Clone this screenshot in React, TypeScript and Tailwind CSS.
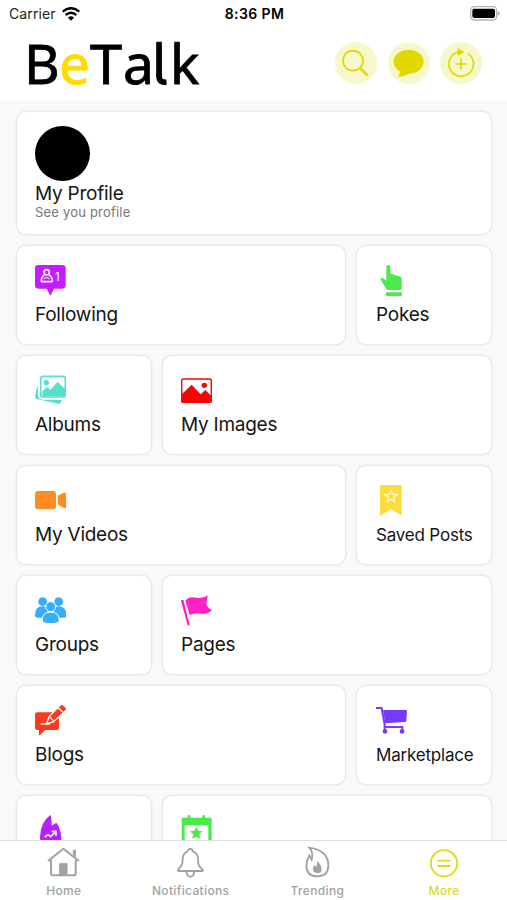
import type { ReactNode } from 'react'

function Icon({ children, className = 'size-[31px]' }: { children: ReactNode; className?: string }) {
  return (
    <svg viewBox="0 0 93 93" fill="currentColor" className={`block shrink-0 ${className}`}>
      {children}
    </svg>
  )
}

function FollowingIcon() {
  return (
    <Icon className="size-[31px] text-[#c31cff]">
      <path d="M10 0H82q10 0 10 10V61q0 10-10 10H57L46 92 35 71H10Q0 71 0 61V10Q0 0 10 0Z" />
      <g fill="none" stroke="#fff" strokeWidth="5">
        <circle cx="35" cy="22" r="8" />
        <path d="M28 30q-9 5-9 18 0 2 3 2h27q3 0 3-2 0-13-10-18" />
        <path d="M26 41q9-7 18 0" strokeWidth="3" />
      </g>
      <text x="60" y="48" fill="#fff" fontSize="34" fontFamily="Inter, sans-serif">1</text>
    </Icon>
  )
}

function PokesIcon() {
  return (
    <Icon className="size-[31px] text-[#4be94b]">
      <path d="M31 6Q31 0 37 0q6 0 6 6V27q5-2 10 3 6-2 10 3 14-1 14 8V70q0 5-5 5H36q-3 0-5-3L15 46q-3-6 3-7 4-1 7 4l6 4Z" />
      <rect x="30" y="82" width="48" height="11" rx="3" />
    </Icon>
  )
}

function AlbumsIcon() {
  return (
    <Icon className="size-[31px] text-[#52e0cf]">
      <path d="M9 31Q1 51 0 65q0 6 8 8l65 14q4 0 6-9l1-4H22Q10 73 9 61Z" />
      <rect x="17" y="4" width="74" height="62" rx="7" fill="#fff" stroke="currentColor" strokeWidth="5" />
      <circle cx="34" cy="23" r="8" />
      <path d="M22 49 36 36l10 9 22-24 22 21v22H22Z" />
    </Icon>
  )
}

function ImagesIcon() {
  return (
    <Icon className="size-[31px] text-[#f60505]">
      <rect x="2" y="12" width="89" height="70" rx="5" fill="none" stroke="currentColor" strokeWidth="4.5" />
      <circle cx="70" cy="31" r="8" />
      <path d="M3 57 32 29 59 58 73 45 91 63v19H3Z" />
    </Icon>
  )
}

function VideosIcon() {
  return (
    <Icon className="size-[31px] text-[#ff8b22]">
      <rect y="18" width="63" height="55" rx="9" />
      <path d="M68 32 86 23q7-1 7 5v37q0 6-7 4L68 58Z" />
    </Icon>
  )
}

function SavedIcon() {
  return (
    <Icon className="size-[31px] text-[#ffdc3d]">
      <path d="M12 3Q12 0 15 0H74q3 0 3 3V92L45 73 12 92Z" />
      <path d="m45 16 5 12 13 1-10 8 3 13-11-7-11 7 3-13-10-8 13-1Z" fill="none" stroke="#fff8c8" strokeWidth="4" />
    </Icon>
  )
}

function GroupsIcon() {
  return (
    <Icon className="size-[31px] text-[#36adff]">
      <circle cx="23" cy="20" r="13" />
      <circle cx="71" cy="20" r="13" />
      <path d="M0 64Q-1 34 23 34q10 0 15 8v26H8q-8-1-8-4ZM94 64Q95 34 71 34q-10 0-15 8v26h30q8-1 8-4Z" />
      <g stroke="#fff" strokeWidth="3">
        <circle cx="47" cy="35" r="15" />
        <path d="M21 78Q21 51 47 51t26 27q-5 8-26 8t-26-8Z" />
      </g>
    </Icon>
  )
}

function PagesIcon() {
  return (
    <Icon className="size-[31px] text-[#ff20ca]">
      <path d="M0 18q-1-4 4-4 4 0 5 4L26 88q0 4-4 4-2 0-3-4Z" />
      <path d="M13 17Q24 3 46 8 66 12 80 1L76 26q3 12 17 20-13 12-30 10-18-4-37 4Z" />
      <path d="m9 16 14 60" stroke="#fff" strokeWidth="2" />
    </Icon>
  )
}

function BlogsIcon() {
  return (
    <Icon className="size-[31px] text-[#fa3a1f]">
      <path d="M6 22H67q5 0 5 6V69q0 6-6 6H31L14 91q-2 1-2-2V75H6q-6 0-6-6V28q0-6 6-6Z" />
      <path d="M17 57H45" stroke="#fff" strokeWidth="4" />
      <path d="M34 57 43 34 77-1q4-3 8 1l8 7q4 5 0 9L56 50Z" stroke="#fff" strokeWidth="4" />
      <path d="m69 8 15 14M43 34l14 15" stroke="#fff" strokeWidth="4" />
    </Icon>
  )
}

function MarketIcon() {
  return (
    <Icon className="size-[31px] text-[#7839ff]">
      <path d="M21 15H89q4 0 4 4L91 47q0 4-4 4L28 55Z" />
      <path d="M2 9H17l9 50v22M26 66h53v14" fill="none" stroke="currentColor" strokeWidth="6" strokeLinecap="round" strokeLinejoin="round" />
      <circle cx="27" cy="79" r="7" />
      <circle cx="78" cy="79" r="7" />
    </Icon>
  )
}

function PopularIcon() {
  return (
    <Icon className="size-[31px] text-[#b91eff]">
      <path d="M46 0q3 0 4 32l14-9q15 20 15 49 0 21-32 21T15 67Q16 22 46 0Z" />
      <path d="m29 66 10-7 8 6 15-15M50 49h13v13" fill="none" stroke="#fff" strokeWidth="5" />
    </Icon>
  )
}

function EventsIcon() {
  return (
    <Icon className="size-[31px] text-[#4be94b]">
      <path d="M6 8H20V4q0-4 4-4t4 4v4H64V4q0-4 4-4t4 4v4H88q4 0 4 4V93H2V12q0-4 4-4Z" />
      <path d="M11 31H82V85H11Z" fill="#fff" />
      <path d="m46 35 6 12 13 2-10 9 3 13-12-6-12 6 3-13-10-9 13-2Z" />
    </Icon>
  )
}

const rows = [
  {
    wideFirst: true,
    items: [
      { label: 'Following', icon: <FollowingIcon /> },
      { label: 'Pokes', icon: <PokesIcon /> },
    ],
  },
  {
    wideFirst: false,
    items: [
      { label: 'Albums', icon: <AlbumsIcon /> },
      { label: 'My Images', icon: <ImagesIcon /> },
    ],
  },
  {
    wideFirst: true,
    items: [
      { label: 'My Videos', icon: <VideosIcon /> },
      { label: 'Saved Posts', icon: <SavedIcon />, small: true },
    ],
  },
  {
    wideFirst: false,
    items: [
      { label: 'Groups', icon: <GroupsIcon /> },
      { label: 'Pages', icon: <PagesIcon /> },
    ],
  },
  {
    wideFirst: true,
    items: [
      { label: 'Blogs', icon: <BlogsIcon /> },
      { label: 'Marketplace', icon: <MarketIcon />, small: true },
    ],
  },
  {
    wideFirst: false,
    items: [
      { label: '', icon: <PopularIcon /> },
      { label: '', icon: <EventsIcon /> },
    ],
  },
]

const card = 'rounded-[10px] border border-[#e9e9e9] bg-white shadow-[0_0_2px_rgba(0,0,0,0.1)]'

function StatusBar() {
  return (
    <div className="grid h-7 grid-cols-3 items-center pb-[1px] pl-[9px] pr-[7px] text-[#222]">
      <div className="flex items-center gap-[6px]">
        <span className="text-[14px] tracking-[0.1px]">Carrier</span>
        <svg viewBox="0 0 54 42" className="h-[14px] w-[18px]" fill="none" stroke="#000" strokeWidth="7">
          <path d="M2 14Q27-7 52 14M11 24q16-14 32 0" />
          <path d="M18 32q9-8 18 0l-9 9Z" fill="#000" stroke="none" />
        </svg>
      </div>
      <div className="text-center text-[14px] font-semibold tracking-[0.4px] text-black">8:36 PM</div>
      <svg viewBox="0 0 90 44" className="h-[14.7px] w-[30px] justify-self-end">
        <rect x="2" y="2" width="78" height="40" rx="11" fill="#fff" stroke="#b5b5b5" strokeWidth="4" />
        <rect x="7" y="8" width="68" height="28" rx="6" />
        <path d="M83 15q7 2 7 7t-7 7Z" fill="#b5b5b5" />
      </svg>
    </div>
  )
}

function Header() {
  return (
    <header className="flex h-[72px] items-start justify-between pl-[24px] pr-[25px]">
      <div className="flex pt-[1px] font-['Noto_Sans',sans-serif] text-[55px] leading-[68px] text-black [-webkit-text-stroke:0.8px]">
        <span className="w-[35px]">B</span>
        <span className="w-[31px] text-[#ffd900]">e</span>
        <span className="w-[33px] origin-left scale-x-105">T</span>
        <span className="w-[29px]">a</span>
        <span className="relative w-[18px]">
          <span className="block [clip-path:inset(0_0_20px_0)]">l</span>
          {/* curved foot of the l */}
          <svg viewBox="0 0 18 14" className="absolute left-0 top-[44px] h-[14px] w-[18px]" fill="none" stroke="currentColor" strokeWidth="5.7">
            <path d="M7.2 0V4Q7.2 9.6 14.5 9.2" />
          </svg>
        </span>
        <span>k</span>
      </div>
      <div className="flex gap-[10.5px] pt-[13.5px] text-[#e1d800]">
        <div className="size-[42px] rounded-full bg-[#f6f7cb]">
          <svg viewBox="0 0 126 126" fill="none" stroke="currentColor" strokeWidth="5">
            <circle cx="54" cy="56" r="30" />
            <path d="m76 79 22 22" strokeWidth="8" />
          </svg>
        </div>
        <div className="size-[42px] rounded-full bg-[#f6f7cb]">
          <svg viewBox="0 0 126 126" fill="currentColor">
            <ellipse cx="62" cy="59" rx="45" ry="36" />
            <path d="M36 82q1 14-6 22 22 1 34-11Z" />
          </svg>
        </div>
        <div className="size-[42px] rounded-full bg-[#f6f7cb]">
          <svg viewBox="0 0 126 126" fill="none" stroke="currentColor" strokeWidth="5">
            <path d="M60 29A37 37 0 1 0 84 35M63 48v35M46 66h34" />
            <path d="m53 18 20 12-20 12Z" fill="currentColor" stroke="none" />
          </svg>
        </div>
      </div>
    </header>
  )
}

const tabs = [
  {
    label: 'Home',
    icon: (
      <>
        <path d="M3 42 49 5l47 37M12 38V81q0 4 4 4H82q4 0 4-4V38" strokeWidth="6" />
        <path d="M79 23V10h6v20M38 50H60V84H38Z" fill="currentColor" strokeWidth="3" />
      </>
    ),
  },
  {
    label: 'Notifications',
    icon: (
      <path d="M42 13q0-7 7-7t7 7Q72 18 72 37c0 18 3 20 13 30q4 5-2 5H15q-6 0-2-5C22 57 26 55 26 37q0-19 16-24M37 72q1 17 12 17t12-17" />
    ),
  },
  {
    label: 'Trending',
    icon: (
      <>
        <path d="M25 2Q82 10 82 55q0 33-33 33-31 0-33-30Q16 42 25 25l7 13Q38 18 25 2Z" />
        <path d="M49 42q14 14 12 29-2 7-12 7-12 0-13-12 0-7 5-11l5 6q4-8 3-19Z" fill="currentColor" strokeWidth="1" />
      </>
    ),
  },
  {
    label: 'More',
    active: true,
    icon: (
      <>
        <circle cx="48" cy="49" r="39.5" />
        <path d="M31 41H65M31 57H65" strokeLinecap="round" />
      </>
    ),
  },
]

function TabBar() {
  return (
    <nav className="grid h-[60px] shrink-0 grid-cols-4 border-t border-[#dedede] bg-white">
      {tabs.map((tab) => (
        <div key={tab.label} className={`flex flex-col items-center pt-[6px] ${tab.active ? 'text-[#dfda16]' : 'text-[#a2a2a2]'}`}>
          <svg viewBox="0 0 96 96" className="size-8 overflow-visible" fill="none" stroke="currentColor" strokeWidth="5.5">
            {tab.icon}
          </svg>
          <span className="mt-[4px] pl-[1px] text-[12px] leading-[16px] font-medium tracking-[0.35px]">{tab.label}</span>
        </div>
      ))}
    </nav>
  )
}

export default function App() {
  return (
    <div className="flex h-[900px] w-[507px] flex-col overflow-hidden bg-white font-['Inter',sans-serif] text-[#151515]">
      <StatusBar />
      <Header />
      <main className="flex min-h-0 flex-1 flex-col gap-[10px] overflow-hidden bg-[#f9f9f9] pl-[16px] pr-[15px] pt-[11px]">
        <section className={`h-[124px] shrink-0 pl-[18px] pt-[14px] ${card}`}>
          <div className="size-[55px] rounded-full bg-black" />
          <h2 className="text-[19px] leading-[25px] tracking-[-0.25px]">My Profile</h2>
          <p className="text-[13px] leading-[13px] tracking-[0.2px] text-[#777]">See you profile</p>
        </section>
        {rows.map((row, i) => (
          <div key={i} className={`grid shrink-0 gap-[10px] ${row.wideFirst ? 'grid-cols-[1fr_136px]' : 'grid-cols-[136px_1fr]'}`}>
            {row.items.map((item, j) => (
              <div key={j} className={`h-[100px] pt-[19px] ${row.wideFirst && j === 1 ? 'pl-[19px]' : 'pl-[18px]'} ${card}`}>
                {item.icon}
                <div className={`whitespace-nowrap ${item.small ? 'mt-[7px] text-[17px] leading-[25px] tracking-[-0.2px]' : 'mt-[6px] text-[19px] leading-[25px] tracking-[-0.25px]'}`}>
                  {item.label}
                </div>
              </div>
            ))}
          </div>
        ))}
      </main>
      <TabBar />
    </div>
  )
}
